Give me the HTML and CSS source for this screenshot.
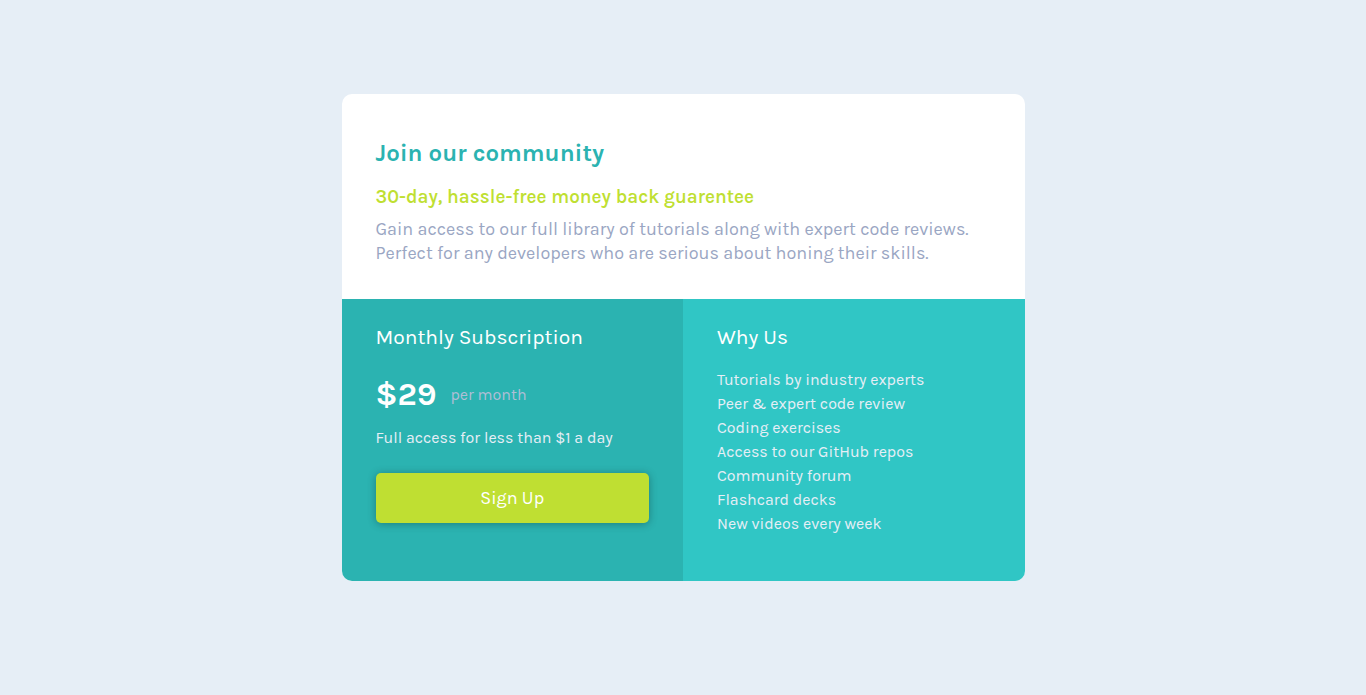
FILE: index.html
```html
<!DOCTYPE html>
<html lang="en">
<head>
<meta charset="utf-8">
<meta name="viewport" content="width=device-width, initial-scale=1">
<title>Join our community</title>
<link rel="stylesheet" href="styles.css">
</head>
<body>
<main class="card">
  <section class="intro">
    <h1 class="intro-title">Join our community</h1>
    <h2 class="intro-offer">30-day, hassle-free money back guarentee</h2>
    <p class="intro-text">Gain access to our full library of tutorials along with expert code reviews. Perfect for any developers who are serious about honing their skills.</p>
  </section>
  <div class="panels">
    <section class="panel plan">
      <h2 class="panel-title">Monthly Subscription</h2>
      <p class="price"><strong class="amount">$29</strong><span class="period">per month</span></p>
      <p class="plan-note">Full access for less than $1 a day</p>
      <button class="signup" type="button">Sign Up</button>
    </section>
    <section class="panel why">
      <h2 class="panel-title">Why Us</h2>
      <ul class="benefits">
        <li>Tutorials by industry experts</li>
        <li>Peer &amp; expert code review</li>
        <li>Coding exercises</li>
        <li>Access to our GitHub repos</li>
        <li>Community forum</li>
        <li>Flashcard decks</li>
        <li>New videos every week</li>
      </ul>
    </section>
  </div>
</main>
</body>
</html>
```
FILE: styles.css
```css
* { box-sizing: border-box; margin: 0; padding: 0; }

body {
  min-height: 100vh;
  padding: 94px 0 64px;
  background: #e6eef6;
  font-family: Karla, "Inter", sans-serif;
  font-size: 16px;
  line-height: 24px;
}

.card {
  width: 50%;
  min-width: 320px;
  margin: 0 auto;
  border-radius: 10px;
  overflow: hidden;
  background: #fff;
}

.intro { padding: 43px 34px 34px; }
.intro-title { color: #2bb3b1; font-size: 24px; font-weight: 700; line-height: 32px; }
.intro-offer { margin-top: 16px; color: #bfdf32; font-size: 19px; font-weight: 600; line-height: 24px; }
.intro-text { margin-top: 8px; color: #9aa6c3; font-size: 18px; line-height: 24px; }

.panels { display: grid; grid-template-columns: 1fr 1fr; }
.panel { padding: 24px 34px 45px; color: #fff; }
.plan { background: #2bb3b1; }
.why { background: #30c6c5; }
.panel-title { font-size: 21px; font-weight: 400; line-height: 28px; }

.price { display: flex; align-items: center; gap: 14px; margin-top: 22px; line-height: 44px; }
.amount { font-size: 32px; font-weight: 700; }
.period { color: #b0bed6; font-size: 16px; }
.plan-note { margin-top: 9px; color: #e6eef6; }

.signup {
  width: 100%;
  height: 50px;
  margin-top: 23px;
  border: 0;
  border-radius: 5px;
  background: #bfdf32;
  box-shadow: 0 1px 8px rgba(0, 0, 0, 0.3);
  color: #fff;
  font: inherit;
  font-size: 18px;
  cursor: pointer;
}

.benefits { margin-top: 17px; list-style: none; color: #e6eef6; }
```
